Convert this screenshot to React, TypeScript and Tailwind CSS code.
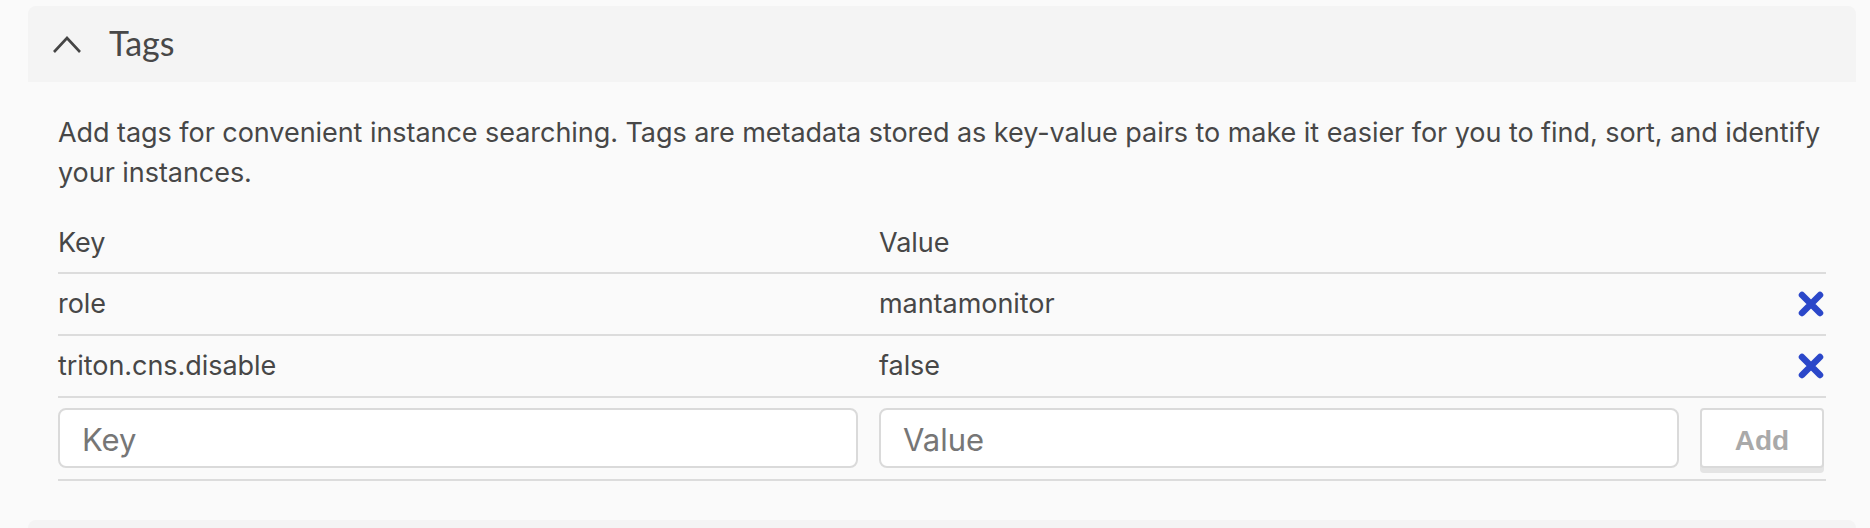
import React from "react";

function XIcon() {
  return (
    <svg width="26" height="26" viewBox="0 0 26 26" className="block">
      <path d="M4 4 L22 22 M22 4 L4 22" stroke="#2b47c9" strokeWidth="6.5" strokeLinecap="round" fill="none" />
    </svg>
  );
}

function Chevron() {
  return (
    <svg width="30" height="20" viewBox="0 0 30 20" className="block">
      <path d="M2 18 L15 4 L28 18" stroke="#454545" strokeWidth="2.6" fill="none" strokeLinecap="butt" strokeLinejoin="miter" />
    </svg>
  );
}

const rows = [
  { k: "role", v: "mantamonitor" },
  { k: "triton.cns.disable", v: "false" },
];

export default function App() {
  return (
    <div className="w-[1870px] h-[528px] bg-[#fafafa] overflow-hidden pt-[6px] pl-[28px] pr-[14px] text-[#474747]" style={{ fontFamily: "Inter, Roboto, 'Liberation Sans', sans-serif" }}>
      <div className="h-[76px] bg-[#f4f4f4] rounded-t-[8px] flex items-center pl-[24px]">
        <Chevron />
        <span className="ml-[27px] text-[34px] leading-none text-[#484848] pb-[2px]" style={{ fontFamily: "Lato, sans-serif" }}>Tags</span>
      </div>
      <div className="px-[30px] pt-[31px] h-[438px] flex flex-col">
        <p className="text-[27px] leading-[40px] text-[#474747] tracking-[-0.05px]">
          Add tags for convenient instance searching. Tags are metadata stored as key-value pairs to make it easier for you to find, sort, and identify your instances.
        </p>
        <div className="mt-[21px] grid grid-cols-[1fr_1fr_126px] gap-x-[21px] h-[60px] items-center border-b-2 border-[#dcdcdc] text-[27px] tracking-[-0.05px]">
          <span>Key</span>
          <span>Value</span>
          <span />
        </div>
        {rows.map((r) => (
          <div key={r.k} className="grid grid-cols-[1fr_1fr_126px] gap-x-[21px] h-[62px] items-center border-b-2 border-[#dcdcdc] text-[27px] tracking-[-0.05px]">
            <span className="pt-[1px]">{r.k}</span>
            <span className="pt-[1px]">{r.v}</span>
            <span className="flex justify-end pr-[2px]">
              <XIcon />
            </span>
          </div>
        ))}
        <div className="grid grid-cols-[1fr_1fr_126px] gap-x-[21px] pt-[10px] pb-[11px] border-b-2 border-[#dcdcdc] items-start">
          <input
            placeholder="Key"
            className="h-[60px] w-full rounded-[8px] border-2 border-[#dadada] bg-white pl-[22px] pt-[2px] text-[31px] text-[#474747] placeholder:text-[#767676] outline-none"
          />
          <input
            placeholder="Value"
            className="h-[60px] w-full rounded-[8px] border-2 border-[#dadada] bg-white pl-[22px] pt-[2px] text-[31px] text-[#474747] placeholder:text-[#767676] outline-none"
          />
          <button className="h-[60px] w-[124px] rounded-[4px] border-2 border-[#dadada] bg-white pt-[6px] text-[28px] font-bold text-[#a9a9a9] shadow-[0_5px_0_#e4e4e4]" style={{ fontFamily: "'Liberation Sans', Arial, sans-serif" }}>
            Add
          </button>
        </div>
      </div>
      <div className="h-[20px] bg-[#f4f4f4] rounded-t-[8px]" />
    </div>
  );
}
